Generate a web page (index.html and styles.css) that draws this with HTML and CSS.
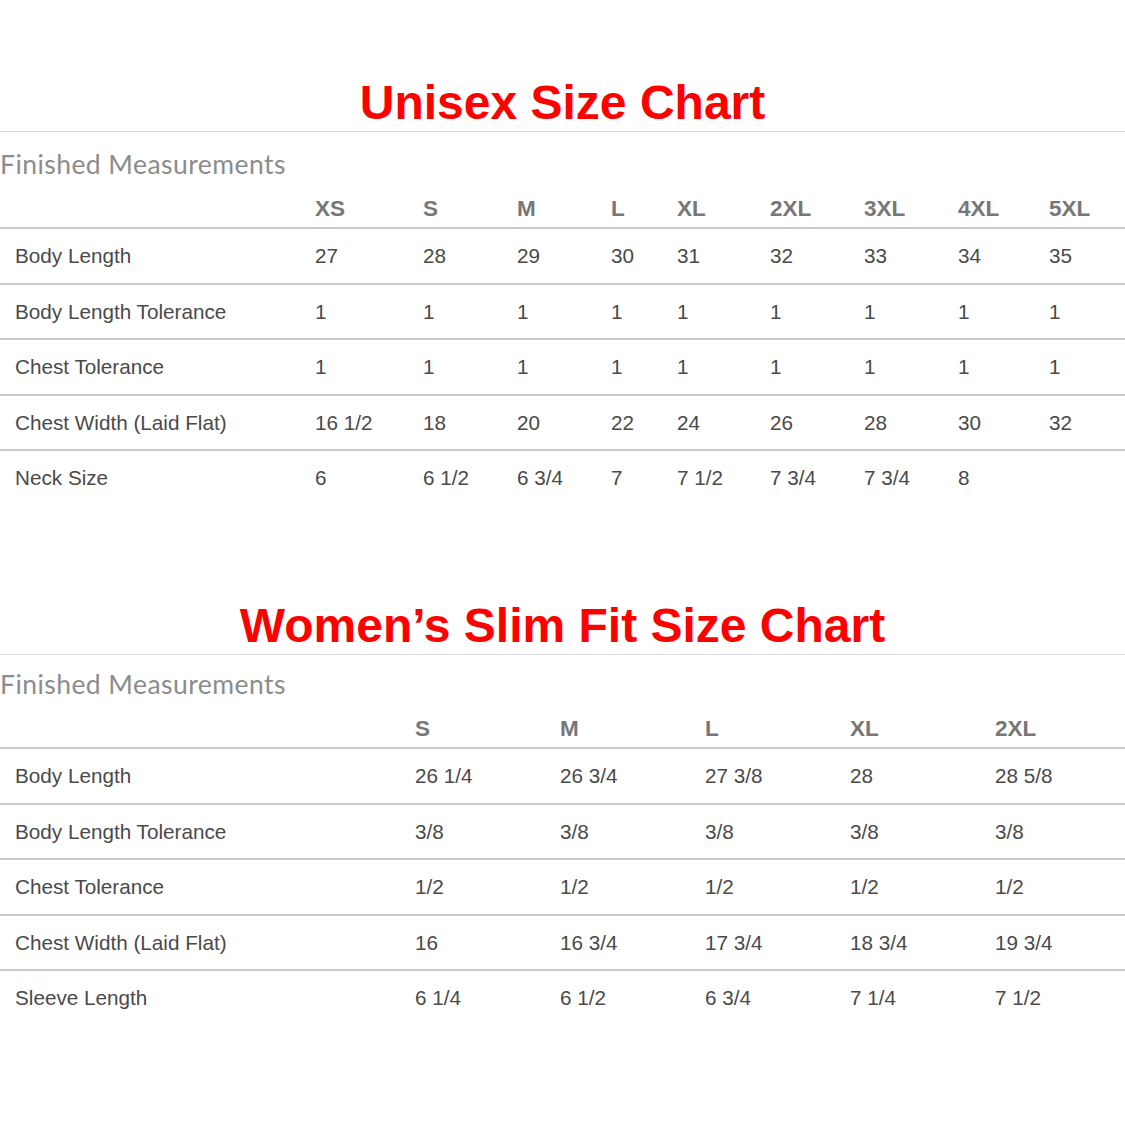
FILE: index.html
```html
<!DOCTYPE html>
<html lang="en">
<head>
<meta charset="utf-8">
<title>Size Charts</title>
<link rel="stylesheet" href="styles.css">
</head>
<body>
<section class="chart chart-unisex">
  <h1 class="chart-title">Unisex Size Chart</h1>
  <h2 class="chart-sub">Finished Measurements</h2>
  <div class="table">
    <div class="row head">
      <div class="cell label"></div>
      <div class="cell">XS</div><div class="cell">S</div><div class="cell">M</div><div class="cell">L</div><div class="cell">XL</div><div class="cell">2XL</div><div class="cell">3XL</div><div class="cell">4XL</div><div class="cell">5XL</div>
    </div>
    <div class="row">
      <div class="cell label">Body Length</div>
      <div class="cell">27</div><div class="cell">28</div><div class="cell">29</div><div class="cell">30</div><div class="cell">31</div><div class="cell">32</div><div class="cell">33</div><div class="cell">34</div><div class="cell">35</div>
    </div>
    <div class="row">
      <div class="cell label">Body Length Tolerance</div>
      <div class="cell">1</div><div class="cell">1</div><div class="cell">1</div><div class="cell">1</div><div class="cell">1</div><div class="cell">1</div><div class="cell">1</div><div class="cell">1</div><div class="cell">1</div>
    </div>
    <div class="row">
      <div class="cell label">Chest Tolerance</div>
      <div class="cell">1</div><div class="cell">1</div><div class="cell">1</div><div class="cell">1</div><div class="cell">1</div><div class="cell">1</div><div class="cell">1</div><div class="cell">1</div><div class="cell">1</div>
    </div>
    <div class="row">
      <div class="cell label">Chest Width (Laid Flat)</div>
      <div class="cell">16 1/2</div><div class="cell">18</div><div class="cell">20</div><div class="cell">22</div><div class="cell">24</div><div class="cell">26</div><div class="cell">28</div><div class="cell">30</div><div class="cell">32</div>
    </div>
    <div class="row last">
      <div class="cell label">Neck Size</div>
      <div class="cell">6</div><div class="cell">6 1/2</div><div class="cell">6 3/4</div><div class="cell">7</div><div class="cell">7 1/2</div><div class="cell">7 3/4</div><div class="cell">7 3/4</div><div class="cell">8</div><div class="cell"></div>
    </div>
  </div>
</section>

<section class="chart chart-women">
  <h1 class="chart-title">Women’s Slim Fit Size Chart</h1>
  <h2 class="chart-sub">Finished Measurements</h2>
  <div class="table">
    <div class="row head">
      <div class="cell label"></div>
      <div class="cell">S</div><div class="cell">M</div><div class="cell">L</div><div class="cell">XL</div><div class="cell">2XL</div>
    </div>
    <div class="row">
      <div class="cell label">Body Length</div>
      <div class="cell">26 1/4</div><div class="cell">26 3/4</div><div class="cell">27 3/8</div><div class="cell">28</div><div class="cell">28 5/8</div>
    </div>
    <div class="row">
      <div class="cell label">Body Length Tolerance</div>
      <div class="cell">3/8</div><div class="cell">3/8</div><div class="cell">3/8</div><div class="cell">3/8</div><div class="cell">3/8</div>
    </div>
    <div class="row">
      <div class="cell label">Chest Tolerance</div>
      <div class="cell">1/2</div><div class="cell">1/2</div><div class="cell">1/2</div><div class="cell">1/2</div><div class="cell">1/2</div>
    </div>
    <div class="row">
      <div class="cell label">Chest Width (Laid Flat)</div>
      <div class="cell">16</div><div class="cell">16 3/4</div><div class="cell">17 3/4</div><div class="cell">18 3/4</div><div class="cell">19 3/4</div>
    </div>
    <div class="row last">
      <div class="cell label">Sleeve Length</div>
      <div class="cell">6 1/4</div><div class="cell">6 1/2</div><div class="cell">6 3/4</div><div class="cell">7 1/4</div><div class="cell">7 1/2</div>
    </div>
  </div>
</section>
</body>
</html>
```

FILE: styles.css
```css
* { box-sizing: border-box; }

html, body {
  margin: 0;
  padding: 0;
  background: #ffffff;
}

body {
  width: 1125px;
  font-family: "Liberation Sans", Arial, sans-serif;
}

.chart-title {
  margin: 0;
  font-family: "Liberation Sans", Arial, sans-serif;
  font-weight: 700;
  font-size: 48px;
  line-height: 56px;
  color: #ff0000;
  text-align: center;
  border-bottom: 1px solid #dcdcdc;
}

.chart-unisex .chart-title { padding-top: 74.5px; }
.chart-women { margin-top: 93px; }

.chart-sub {
  margin: 17px 0 0 0;
  font-family: Lato, "Open Sans", sans-serif;
  font-weight: 400;
  font-size: 26.5px;
  letter-spacing: 0.45px;
  line-height: 30px;
  color: #8c8c8c;
}

.chart-women .chart-sub { margin-top: 14px; }

.table {
  margin-top: 17.5px;
}

.row {
  display: grid;
  height: 55.5px;
  line-height: 53.5px;
  font-size: 20.7px;
  color: #4a4a4a;
  border-bottom: 2px solid #cbcbcb;
}

.chart-unisex .row {
  grid-template-columns: 315px 108px 94px 94px 66px 93px 94px 94px 91px 1fr;
}

.chart-women .row {
  grid-template-columns: 415px 145px 145px 145px 145px 1fr;
}

.row.head {
  height: 33px;
  line-height: 26px;
  padding-bottom: 5px;
  font-size: 22.5px;
  font-weight: 700;
  color: #777777;
}

.row.last {
  border-bottom: none;
  height: 53.5px;
}

.cell {
  white-space: nowrap;
}

.cell.label {
  padding-left: 15px;
}
```
